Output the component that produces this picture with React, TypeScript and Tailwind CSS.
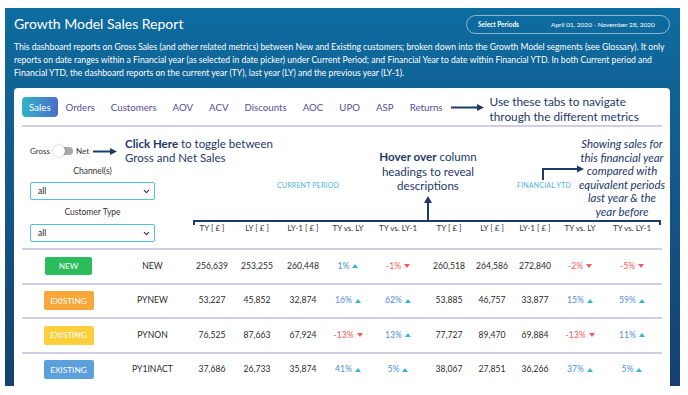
import { ChevronDown } from "lucide-react";

const COLS = "grid-cols-[93px_75px_44px_46px_46px_44px_56px_46px_40px_46px_44px_60px]";

type Pct = { v: string; up: boolean };

const rows: {
  badge: string;
  badgeClass: string;
  seg: string;
  cp: string[];
  cpPct: Pct[];
  ytd: string[];
  ytdPct: Pct[];
}[] = [
  {
    badge: "NEW",
    badgeClass: "bg-[#2bbd5c] w-[47px] h-[18px]",
    seg: "NEW",
    cp: ["256,639", "253,255", "260,448"],
    cpPct: [{ v: "1%", up: true }, { v: "-1%", up: false }],
    ytd: ["260,518", "264,586", "272,840"],
    ytdPct: [{ v: "-2%", up: false }, { v: "-5%", up: false }],
  },
  {
    badge: "EXISTING",
    badgeClass: "bg-[#f9a63a] w-[50px] h-[19px]",
    seg: "PYNEW",
    cp: ["53,227", "45,852", "32,874"],
    cpPct: [{ v: "16%", up: true }, { v: "62%", up: true }],
    ytd: ["53,885", "46,757", "33,877"],
    ytdPct: [{ v: "15%", up: true }, { v: "59%", up: true }],
  },
  {
    badge: "EXISTING",
    badgeClass: "bg-[#fdd03b] w-[50px] h-[19px]",
    seg: "PYNON",
    cp: ["76,525", "87,663", "67,924"],
    cpPct: [{ v: "-13%", up: false }, { v: "13%", up: true }],
    ytd: ["77,727", "89,470", "69,884"],
    ytdPct: [{ v: "-13%", up: false }, { v: "11%", up: true }],
  },
  {
    badge: "EXISTING",
    badgeClass: "bg-[#5b9fdb] w-[50px] h-[19px]",
    seg: "PY1INACT",
    cp: ["37,686", "26,733", "35,874"],
    cpPct: [{ v: "41%", up: true }, { v: "5%", up: true }],
    ytd: ["38,067", "27,851", "36,266"],
    ytdPct: [{ v: "37%", up: true }, { v: "5%", up: true }],
  },
];

const tabs = ["Orders", "Customers", "AOV", "ACV", "Discounts", "AOC", "UPO", "ASP", "Returns"];

const headers = ["TY [ £ ]", "LY [ £ ]", "LY-1 [ £ ]", "TY vs. LY", "TY vs. LY-1", "TY [ £ ]", "LY [ £ ]", "LY-1 [ £ ]", "TY vs. LY", "TY vs. LY-1"];

function Arrow({ width }: { width: number }) {
  return (
    <svg width={width} height="7" viewBox={`0 0 ${width} 7`} className="shrink-0">
      <line x1="0" y1="3.5" x2={width - 6} y2="3.5" stroke="#1e3a6b" strokeWidth="2" />
      <polygon points={`${width - 7},0 ${width},3.5 ${width - 7},7`} fill="#1e3a6b" />
    </svg>
  );
}

function PctCell({ p }: { p: Pct }) {
  return (
    <div className="flex items-center justify-center gap-[3px]">
      <span className={p.up ? "text-[#4c8fd8]" : "text-[#f05a5a]"}>{p.v}</span>
      {p.up ? (
        <svg width="6" height="4" viewBox="0 0 6 4">
          <polygon points="0,4 3,0 6,4" fill="#37b5d6" />
        </svg>
      ) : (
        <svg width="6" height="4" viewBox="0 0 6 4">
          <polygon points="0,0 6,0 3,4" fill="#f05a5a" />
        </svg>
      )}
    </div>
  );
}

function SelectBox() {
  return (
    <div className="h-[18px] w-full border-[1.5px] border-[#52c2d8] rounded-[2px] bg-white flex items-center justify-between pl-[7px] pr-[3px] text-[8.5px] text-[#222]">
      <span>all</span>
      <ChevronDown size={9} strokeWidth={3} className="text-[#333]" />
    </div>
  );
}

export default function App() {
  return (
    <div className="w-[688px] h-[395px] bg-white font-['Lato',sans-serif] overflow-hidden">
      <div className="ml-[5px] mt-[8px] w-[675px] h-[378px] bg-gradient-to-b from-[#0d6ca0] to-[#15416e] pl-[9px] pr-[10px] overflow-hidden">
        {/* Title row */}
        <div className="pt-[7px] flex items-center justify-between h-[26px]">
          <h1 className="text-[14px] text-white leading-none -mt-[2px]">Growth Model Sales Report</h1>
          <div className="w-[204px] h-[19px] rounded-full border border-white/50 flex items-center pl-[11px] text-[6.5px] text-white">
            <span className="font-bold w-[73px]">Select Periods</span>
            <span>April 01, 2020 - November 28, 2020</span>
          </div>
        </div>
        <div className="mt-[7px] text-[8.6px] leading-[13px] text-white whitespace-nowrap">
          <p>This dashboard reports on Gross Sales (and other related metrics) between New and Existing customers; broken down into the Growth Model segments (see Glossary). It only</p>
          <p>reports on date ranges within a Financial year (as selected in date picker) under Current Period; and Financial Year to date within Financial YTD. In both Current period and</p>
          <p>Financial YTD, the dashboard reports on the current year (TY), last year (LY) and the previous year (LY-1).</p>
        </div>

        {/* Card */}
        <div className="mt-[8px] bg-white rounded-[4px] px-2 h-[320px] overflow-hidden">
          {/* Tabs */}
          <div className="pt-[9px] pb-[8px] border-b-2 border-[#d0cee6]">
            <div className="h-[20px] flex items-center text-[9.7px] text-[#574c94]">
              <div className="h-[20px] px-[7px] rounded-[4px] bg-gradient-to-r from-[#2eb4c8] to-[#4a6bc8] text-white flex items-center">Sales</div>
              {tabs.map((t) => (
                <span key={t} className="px-2">{t}</span>
              ))}
              <Arrow width={33} />
              <div className="ml-[6px] mt-[3px] text-[11.8px] leading-[15px] text-[#23386a] whitespace-nowrap">
                <div>Use these tabs to navigate</div>
                <div>through the different metrics</div>
              </div>
            </div>
          </div>

          {/* Header section */}
          <div className={`relative grid ${COLS} border-b-2 border-[#d0cee6]`}>
            <div className="col-span-2 row-span-2 pl-2 pt-[10px]">
              <div className="w-[125px]">
                <div className="h-[28px] flex items-center text-[8px] text-[#333] whitespace-nowrap">
                  <span className="shrink-0">Gross</span>
                  <div className="shrink-0 ml-[4px] w-[19px] h-[8px] rounded-full bg-[#a9a9a9] relative">
                    <div className="absolute -left-[1px] -top-[2px] w-[12px] h-[12px] rounded-full bg-white shadow-[0_0_2px_rgba(0,0,0,0.35)]" />
                  </div>
                  <span className="shrink-0 ml-[3px]">Net</span>
                  <span className="shrink-0 ml-[4px] flex"><Arrow width={24} /></span>
                  <div className="shrink-0 ml-[8px] text-[11.5px] leading-[14.5px] text-[#23386a]">
                    <div><span className="font-bold">Click Here</span> to toggle between</div>
                    <div>Gross and Net Sales</div>
                  </div>
                </div>
                <div className="h-[12px] text-center text-[8.5px] leading-[12px] text-[#333]">Channel(s)</div>
                <div className="mt-[5px]"><SelectBox /></div>
                <div className="mt-[6px] h-[12px] text-center text-[8.5px] leading-[12px] text-[#333]">Customer Type</div>
                <div className="mt-[6px]"><SelectBox /></div>
              </div>
            </div>

            <div className="col-span-10 h-[93px] flex items-end pb-[30px] text-[7px] tracking-[0.2px] text-[#4fb2e3]">
              <div className="w-[236px] text-center">CURRENT PERIOD</div>
              <div className="w-[236px] text-center">FINANCIAL YTD</div>
            </div>

            <div className="col-span-10 h-[28px] relative">
              <div className="absolute left-[3px] right-[1px] top-0 h-[5px] border-t-2 border-x-2 border-[#1e3a6b]" />
              <div className="grid grid-cols-[44px_46px_46px_44px_56px_46px_40px_46px_44px_60px] pt-[2px] text-[8px] leading-[12px] text-[#333]">
                {headers.map((h, i) => (
                  <div key={i} className="text-center whitespace-nowrap">{h}</div>
                ))}
              </div>
            </div>

            {/* Annotations */}
            <div className="absolute left-[346px] top-[23px] w-[120px] text-center text-[11.6px] leading-[14.5px] text-[#23386a]">
              <div><span className="font-bold">Hover over</span> column</div>
              <div>headings to reveal</div>
              <div>descriptions</div>
            </div>
            <svg className="absolute left-[402px] top-[69px]" width="8" height="24" viewBox="0 0 8 24">
              <polygon points="0,7 4,0 8,7" fill="#1e3a6b" />
              <line x1="4" y1="6" x2="4" y2="24" stroke="#1e3a6b" strokeWidth="2" />
            </svg>
            <svg className="absolute left-[520px] top-[38px]" width="42" height="15" viewBox="0 0 42 15">
              <polyline points="1,15 1,4 36,4" fill="none" stroke="#1e3a6b" strokeWidth="2" />
              <polygon points="35,0.5 42,4 35,7.5" fill="#1e3a6b" />
            </svg>
            <div className="absolute left-[553px] top-[10px] w-[94px] text-center italic text-[11.4px] leading-[13.6px] text-[#23386a] whitespace-nowrap">
              <div>Showing sales for</div>
              <div>this financial year</div>
              <div>compared with</div>
              <div>equivalent periods</div>
              <div>last year &amp; the</div>
              <div>year before</div>
            </div>
          </div>

          {/* Rows */}
          {rows.map((r, i) => (
            <div key={i} className={`grid ${COLS} h-[34.5px] border-b-2 border-[#d0cee6] items-center text-[8.6px] text-[#2a2a2a]`}>
              <div className="flex justify-center">
                <div className={`${r.badgeClass} rounded-[2px] flex items-center justify-center text-white text-[8.3px]`}>{r.badge}</div>
              </div>
              <div className="text-center">{r.seg}</div>
              {r.cp.map((v, j) => (
                <div key={j} className="text-center">{v}</div>
              ))}
              {r.cpPct.map((p, j) => (
                <PctCell key={j} p={p} />
              ))}
              {r.ytd.map((v, j) => (
                <div key={j} className="text-center">{v}</div>
              ))}
              {r.ytdPct.map((p, j) => (
                <PctCell key={j} p={p} />
              ))}
            </div>
          ))}
        </div>
      </div>
    </div>
  );
}
